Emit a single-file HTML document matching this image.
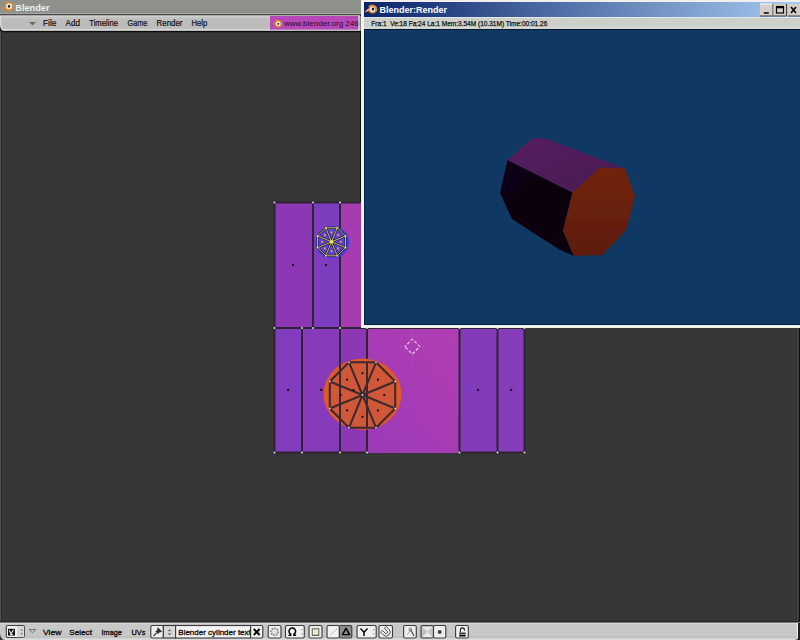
<!DOCTYPE html>
<html><head><meta charset="utf-8">
<style>
html,body{margin:0;padding:0;width:800px;height:640px;overflow:hidden;background:#373737;font-family:"Liberation Sans",sans-serif;}
svg{position:absolute;left:0;top:0;}
</style></head>
<body>
<svg width="800" height="640" viewBox="0 0 800 640" font-family="Liberation Sans, sans-serif">
<defs>
  <linearGradient id="tb" x1="0" x2="1" y1="0" y2="0">
    <stop offset="0" stop-color="#0a246a"/>
    <stop offset="1" stop-color="#a6caf0"/>
  </linearGradient>
  <linearGradient id="uvA" x1="0" x2="1" y1="0" y2="0">
    <stop offset="0" stop-color="#8c3cc4"/>
    <stop offset="1" stop-color="#a43cb8"/>
  </linearGradient>
  <linearGradient id="uvBig" x1="0" x2="1" y1="1" y2="0">
    <stop offset="0" stop-color="#9c3ab8"/>
    <stop offset="1" stop-color="#b23eb2"/>
  </linearGradient>
  <linearGradient id="orF" x1="0" x2="0" y1="0" y2="1">
    <stop offset="0" stop-color="#72240e"/>
    <stop offset="1" stop-color="#5e1c0a"/>
  </linearGradient>
  <linearGradient id="topF" x1="0" x2="1" y1="0" y2="1">
    <stop offset="0" stop-color="#561e60"/>
    <stop offset="1" stop-color="#4a1a52"/>
  </linearGradient>
  <radialGradient id="logoG" cx="0.5" cy="0.5" r="0.5">
    <stop offset="0" stop-color="#ffffff"/>
    <stop offset="1" stop-color="#f0a020"/>
  </radialGradient>
</defs>

<!-- main background -->
<rect x="0" y="0" width="800" height="640" fill="#373737"/>

<!-- main title bar -->
<rect x="0" y="0" width="361" height="13" fill="#8f918d"/>
<rect x="0" y="13" width="361" height="1.5" fill="#a5a6a3"/>
<rect x="0" y="14.5" width="361" height="1" fill="#282828"/>
<rect x="358" y="16" width="2.5" height="15" fill="#d8c8d8"/>
<rect x="360" y="31" width="1" height="2" fill="#303030"/>
<g transform="translate(0,-0.7)">
  <path d="M2,9 L5.5,5.5 L4,3 L8,3 C11.5,2.5 14,4.5 14,7 C14,10 11.5,12 8.5,12 C5.5,12 4,10.5 4,9 Z" fill="#d88a30"/>
  <circle cx="9" cy="7" r="3" fill="#f8f0d0"/>
  <ellipse cx="9" cy="7" rx="1.2" ry="1.5" fill="#10206a"/>
</g>
<text x="15.3" y="10.7" font-size="9.2" font-weight="bold" fill="#f0f0f0">Blender</text>

<!-- menu bar -->
<rect x="0" y="15.5" width="360" height="15.5" fill="#bcbcbc"/>
<rect x="0" y="15.5" width="360" height="1.2" fill="#e0e0e0"/>
<rect x="0" y="16.7" width="360" height="2.3" fill="#c3c3c3"/>
<rect x="0" y="29" width="360" height="1.5" fill="#d8d8d8"/>
<rect x="0" y="30.9" width="361" height="1.2" fill="#0c0c0c"/>
<rect x="0" y="32.1" width="361" height="1" fill="#2c2c2c"/>
<rect x="0" y="16" width="1.2" height="10" fill="#dadada"/>
<path d="M0,25 Q0,31 6,31.5 L0,32 Z" fill="#1a1a1a"/>
<path d="M1,25 Q1,30 6,30" stroke="#e0e0e0" stroke-width="1" fill="none"/>
<path d="M0,29 Q0,32 3,32.5 L0,33 Z" fill="#505050"/>
<path d="M29,22 L36,22 L32.5,25.5 Z" fill="#6a6a6a"/>
<g font-size="8.4" fill="#101010" stroke="#101010" stroke-width="0.2">
  <text x="43" y="26.3" textLength="13.5" lengthAdjust="spacingAndGlyphs">File</text>
  <text x="65.5" y="26.3" textLength="14.5" lengthAdjust="spacingAndGlyphs">Add</text>
  <text x="89.2" y="26.3" textLength="29" lengthAdjust="spacingAndGlyphs">Timeline</text>
  <text x="127.5" y="26.3" textLength="19.8" lengthAdjust="spacingAndGlyphs">Game</text>
  <text x="156.6" y="26.3" textLength="25.8" lengthAdjust="spacingAndGlyphs">Render</text>
  <text x="191.5" y="26.3" textLength="15.8" lengthAdjust="spacingAndGlyphs">Help</text>
</g>
<rect x="270" y="16" width="88" height="13.6" fill="#b648b8"/>
<g transform="translate(272,18)">
  <path d="M1,6 L4,3 L3,1.5 L6,2 C8.5,2 10,3.5 10,5.5 C10,8 8,9.5 6,9.5 C4,9.5 2.5,8 2.5,6.5 Z" fill="#e88a1a"/>
  <circle cx="6.3" cy="5.8" r="2.2" fill="#ffffff"/>
  <circle cx="6.3" cy="5.8" r="1.1" fill="#10306a"/>
</g>
<text x="284" y="26" font-size="8" fill="#2a0a2a">www.blender.org 246</text>

<rect x="0" y="32" width="1" height="590" fill="#504e52"/>
<rect x="1" y="32" width="1" height="590" fill="#2a2a2c"/>
<rect x="796" y="327" width="1" height="295" fill="#303030"/>
<rect x="797" y="327" width="1.6" height="295" fill="#4a4a4a"/>
<rect x="798.8" y="327" width="1.2" height="295" fill="#101010"/>
<!-- UV map -->
<g id="uv">
  <rect x="275" y="203" width="38" height="125" fill="#8c37b4"/>
  <rect x="313" y="203" width="27" height="125" fill="#7e3cbe"/>
  <rect x="340" y="203" width="21" height="125" fill="#a53caf"/>
  <rect x="275" y="328" width="27" height="125" fill="#823cbe"/>
  <rect x="302" y="328" width="38" height="125" fill="#873ab9"/>
  <rect x="340" y="328" width="27" height="125" fill="#8c37b4"/>
  <rect x="367" y="328" width="92.5" height="125" fill="url(#uvBig)"/>
  <rect x="459.5" y="328" width="38" height="125" fill="#823cb9"/>
  <rect x="497.5" y="328" width="27" height="125" fill="#873cb9"/>
  <g stroke="#2e2434" stroke-width="2" fill="none">
    <path d="M274.5,202.5 H361 M274.5,202.5 V453 M313,202.5 V328 M340,202.5 V453 M274.5,328 H525 M302,328 V453 M367,328 V453 M459.5,328 V453 M497.5,328 V453 M524.5,328 V453 M274.5,452.5 H367 M459.5,452.5 H525"/>
  </g>
  <g fill="#1a1020">
    <rect x="292" y="264" width="2" height="2"/>
    <rect x="325" y="264" width="2" height="2"/>
    <rect x="287" y="388.8" width="2.2" height="2.2"/>
    <rect x="320" y="388.8" width="2.2" height="2.2"/>
    <rect x="477" y="388.8" width="2.2" height="2.2"/>
    <rect x="510" y="388.8" width="2.2" height="2.2"/>
  </g>
  <!-- orange face -->
  <ellipse cx="362.5" cy="394.3" rx="39" ry="35.8" fill="#e0582a"/>
  <polygon points="349.0,362.3 376.0,362.3 395.2,381.5 395.2,408.5 376.0,427.7 349.0,427.7 329.8,408.5 329.8,381.5" fill="#d05838"/>
  <g stroke="#3a2a2e" stroke-width="2" fill="none">
    <polygon points="349.0,362.3 376.0,362.3 395.2,381.5 395.2,408.5 376.0,427.7 349.0,427.7 329.8,408.5 329.8,381.5"/>
    <path d="M362.5,395L349.0,362.3 M362.5,395L376.0,362.3 M362.5,395L395.2,381.5 M362.5,395L395.2,408.5 M362.5,395L376.0,427.7 M362.5,395L349.0,427.7 M362.5,395L329.8,408.5 M362.5,395L329.8,381.5"/>
    <path d="M340,362 V428 M367,362 V428"/>
  </g>
  <g fill="#1a1010">
    <rect x="361.5" y="372.2" width="2" height="2"/>
    <rect x="376.9" y="378.6" width="2" height="2"/>
    <rect x="383.3" y="394" width="2" height="2"/>
    <rect x="376.9" y="409.4" width="2" height="2"/>
    <rect x="361.5" y="415.8" width="2" height="2"/>
    <rect x="346.1" y="409.4" width="2" height="2"/>
    <rect x="339.7" y="394" width="2" height="2"/>
    <rect x="346.1" y="378.6" width="2" height="2"/>
    <rect x="352.5" y="389" width="2" height="2"/>
  </g>
  <!-- blue face -->
  <ellipse cx="332.4" cy="242.3" rx="17" ry="16.3" fill="#4a3ce4"/>
  <polygon points="325.7,227.8 337.3,227.8 345.5,236.0 345.5,247.6 337.3,255.8 325.7,255.8 317.5,247.6 317.5,236.0" fill="#5a44d4"/>
  <g stroke="#181828" stroke-width="2.3" fill="none" opacity="0.8">
    <polygon points="325.7,227.8 337.3,227.8 345.5,236.0 345.5,247.6 337.3,255.8 325.7,255.8 317.5,247.6 317.5,236.0"/>
    <path d="M331.5,241.8L325.7,227.8 M331.5,241.8L337.3,227.8 M331.5,241.8L345.5,236.0 M331.5,241.8L345.5,247.6 M331.5,241.8L337.3,255.8 M331.5,241.8L325.7,255.8 M331.5,241.8L317.5,247.6 M331.5,241.8L317.5,236.0"/>
  </g>
  <g stroke="#d8c858" stroke-width="0.9" fill="none">
    <polygon points="325.7,227.8 337.3,227.8 345.5,236.0 345.5,247.6 337.3,255.8 325.7,255.8 317.5,247.6 317.5,236.0"/>
    <path d="M331.5,241.8L325.7,227.8 M331.5,241.8L337.3,227.8 M331.5,241.8L345.5,236.0 M331.5,241.8L345.5,247.6 M331.5,241.8L337.3,255.8 M331.5,241.8L325.7,255.8 M331.5,241.8L317.5,247.6 M331.5,241.8L317.5,236.0"/>
  </g>
  <circle cx="331.5" cy="241.8" r="1.8" fill="#e8e870"/>
  <g fill="#e8e0b0">
    <circle cx="325.7" cy="227.8" r="0.9"/><circle cx="337.3" cy="227.8" r="0.9"/><circle cx="345.5" cy="236" r="0.9"/><circle cx="345.5" cy="247.6" r="0.9"/>
    <circle cx="337.3" cy="255.8" r="0.9"/><circle cx="325.7" cy="255.8" r="0.9"/><circle cx="317.5" cy="247.6" r="0.9"/><circle cx="317.5" cy="236" r="0.9"/>
  </g>
  <g fill="#e89060">
    <circle cx="331.5" cy="232.4" r="1.1"/><circle cx="338.1" cy="235.2" r="1.1"/><circle cx="340.9" cy="241.8" r="1.1"/><circle cx="338.1" cy="248.4" r="1.1"/>
    <circle cx="331.5" cy="251.2" r="1.1"/><circle cx="324.9" cy="248.4" r="1.1"/><circle cx="322.1" cy="241.8" r="1.1"/><circle cx="324.9" cy="235.2" r="1.1"/>
  </g>
  <g><circle cx="274.5" cy="202.5" r="1" fill="#e8d8e8"/><circle cx="313" cy="202.5" r="1" fill="#e8d8e8"/><circle cx="340" cy="202.5" r="1" fill="#e8d8e8"/><circle cx="274.5" cy="328" r="1" fill="#e8d8e8"/><circle cx="302" cy="328" r="1" fill="#e8d8e8"/><circle cx="313" cy="328" r="1" fill="#e8d8e8"/><circle cx="340" cy="328" r="1" fill="#e8d8e8"/><circle cx="367" cy="328" r="1" fill="#e8d8e8"/><circle cx="459.5" cy="328" r="1" fill="#e8d8e8"/><circle cx="497.5" cy="328" r="1" fill="#e8d8e8"/><circle cx="524.5" cy="328" r="1" fill="#e8d8e8"/><circle cx="274.5" cy="452.5" r="1" fill="#e8d8e8"/><circle cx="302" cy="452.5" r="1" fill="#e8d8e8"/><circle cx="340" cy="452.5" r="1" fill="#e8d8e8"/><circle cx="367" cy="452.5" r="1" fill="#e8d8e8"/><circle cx="459.5" cy="452.5" r="1" fill="#e8d8e8"/><circle cx="497.5" cy="452.5" r="1" fill="#e8d8e8"/><circle cx="524.5" cy="452.5" r="1" fill="#e8d8e8"/></g>
  <g><circle cx="349.0" cy="362.3" r="0.9" fill="#e0e0e0"/><circle cx="376.0" cy="362.3" r="0.9" fill="#e0e0e0"/><circle cx="395.2" cy="381.5" r="0.9" fill="#e0e0e0"/><circle cx="395.2" cy="408.5" r="0.9" fill="#e0e0e0"/><circle cx="376.0" cy="427.7" r="0.9" fill="#e0e0e0"/><circle cx="349.0" cy="427.7" r="0.9" fill="#e0e0e0"/><circle cx="329.8" cy="408.5" r="0.9" fill="#e0e0e0"/><circle cx="329.8" cy="381.5" r="0.9" fill="#e0e0e0"/><circle cx="362.5" cy="395" r="0.9" fill="#e0e0e0"/></g>
  <!-- 2d cursor -->
  <path d="M404.8,346.6 L412.3,339.1 L419.8,346.6 L412.3,354.1 Z" fill="none" stroke="#f4c8f0" stroke-width="1.2" stroke-dasharray="3.2 1.8" stroke-dashoffset="1.5" stroke-linejoin="round"/>
  <path d="M398,346.6 H404 M420.5,346.6 H426 M412.3,332 V338 M412.3,355 V361" stroke="#c060c0" stroke-width="1" opacity="0.35"/>
</g>

<!-- render window -->
<rect x="360" y="31" width="1" height="171" fill="#0c100c"/>
<rect x="361" y="0" width="439" height="328" fill="#eef4ee"/>
<rect x="361" y="0" width="439" height="2" fill="#f4eeee"/>
<rect x="364" y="2" width="436" height="15" fill="url(#tb)"/>
<g>
  <path d="M365,11.5 L369.5,7.5 L368,6.5 L371,4.5 L373,4.8 C375.8,5 377.3,7 377.3,9 C377.3,11.8 375,13.5 372.5,13.5 C370.3,13.5 369,12.5 368.5,11 L366,12.5 Z" fill="#e08a30"/>
  <path d="M365,11.5 L368.5,8.5 L368.8,10.5 Z" fill="#f0a0a0"/>
  <circle cx="372.5" cy="9.2" r="2.7" fill="#f4ecc8"/>
  <ellipse cx="373" cy="9" rx="1.3" ry="1.5" fill="#0a1a50"/>
</g>
<text x="379.5" y="13.2" font-size="9" font-weight="bold" fill="#ffffff">Blender:Render</text>
<!-- window buttons -->
<g>
  <rect x="760" y="4" width="13" height="12" fill="#d4d0c8" stroke="#404040" stroke-width="0"/>
  <path d="M760,16 H773 V4" stroke="#404040" fill="none"/>
  <path d="M760,4 H772" stroke="#ffffff" fill="none"/>
  <rect x="763.8" y="12.2" width="5" height="1.5" fill="#000"/>
  <rect x="773.5" y="4" width="13" height="12" fill="#d4d0c8"/>
  <path d="M773.5,16 H786.5 V4" stroke="#404040" fill="none"/>
  <rect x="776.5" y="6.5" width="7" height="6.5" fill="none" stroke="#000" stroke-width="1.2"/>
  <rect x="776.5" y="6.5" width="7" height="1.8" fill="#000"/>
  <rect x="788" y="4" width="13" height="12" fill="#d4d0c8"/>
  <path d="M788,16 H801" stroke="#404040" fill="none"/>
  <path d="M791,7 L796,13 M796,7 L791,13" stroke="#000" stroke-width="1.6"/>
</g>
<rect x="364" y="17" width="436" height="12" fill="#cdd0c8"/>
<rect x="364" y="27.2" width="436" height="1.2" fill="#dadcd8"/>
<rect x="364" y="17" width="436" height="1" fill="#e2e6ee"/>

<text x="371.3" y="26" font-size="7.8" fill="#101010" stroke="#101010" stroke-width="0.25" textLength="176" lengthAdjust="spacingAndGlyphs" xml:space="preserve">Fra:1  Ve:18 Fa:24 La:1 Mem:3.54M (10.31M) Time:00:01.26</text>
<rect x="364" y="29" width="436" height="295" fill="#0f3963"/>
<rect x="364" y="29" width="436" height="0.9" fill="#081430"/>
<rect x="364" y="324" width="436" height="1" fill="#061a40"/>
<rect x="364" y="29" width="1" height="295" fill="#0a2040"/>

<!-- 3D object -->
<filter id="soft" x="-10%" y="-10%" width="120%" height="120%"><feGaussianBlur stdDeviation="0.6"/></filter>
<linearGradient id="darkF" x1="0" x2="1" y1="0" y2="1">
  <stop offset="0" stop-color="#0c0614"/>
  <stop offset="1" stop-color="#07030a"/>
</linearGradient>
<g filter="url(#soft)">
  <polygon points="507.5,160 572.5,192.5 563,231 574,256 560,250 512,219 500,193" fill="url(#darkF)"/>
  <polygon points="507.5,160 532.5,138.5 544,138 625,168.5 600,167.5 572.5,192.5" fill="url(#topF)"/>
  <polygon points="572.5,192.5 600,167.5 625,168.5 635,196 626,230 602,255 574,256 563,231" fill="url(#orF)"/>
</g>

<!-- bottom toolbar -->
<rect x="0" y="621.5" width="800" height="1.2" fill="#141414"/>
<rect x="0" y="622.7" width="800" height="17.3" fill="#c8c8c8"/>
<rect x="0" y="622.7" width="800" height="1.3" fill="#d8d8d8"/>
<rect x="0" y="636.3" width="800" height="1" fill="#bcbcbc"/>
<rect x="0" y="638.5" width="800" height="1.5" fill="#dcdcdc"/>
<rect x="797" y="623" width="1" height="15" fill="#f0f0f0"/>
<rect x="798" y="623" width="2" height="17" fill="#202020"/>
<path d="M800,633 Q800,639 795,639.5 L800,640 Z" fill="#202020"/>
<path d="M0,633 Q0,639 5,639.5 L0,640 Z" fill="#303030"/>
<g stroke="#3e3e3e" stroke-width="1.15">
  <!-- editor type -->
  <rect x="6.3" y="625.5" width="18" height="12" rx="1.5" fill="#f4f4f4"/>
  <!-- pin, arrows, text, X -->
  <rect x="150.8" y="625.5" width="12.6" height="12.5" rx="1.5" fill="#eeeeee"/>
  <rect x="163.4" y="625.5" width="12.2" height="12.5" fill="#d8d8d8"/>
  <rect x="175.6" y="625.5" width="75" height="12.5" fill="#f4f4f4"/>
  <rect x="250.6" y="625.5" width="12.2" height="12.5" rx="1.5" fill="#f0f0f0"/>
  <rect x="268.2" y="625.5" width="12.8" height="12.5" rx="1.5" fill="#eeeeee"/>
  <rect x="285.5" y="625.5" width="18.8" height="12.5" rx="1.5" fill="#f2f2f2"/>
  <rect x="309" y="625.5" width="13" height="12.5" rx="1.5" fill="#eeeeee"/>
  <rect x="327" y="625.5" width="12.4" height="12.5" rx="1.5" fill="#f2f2f2"/>
  <rect x="339.4" y="625.5" width="12.4" height="12.5" rx="1.5" fill="#8c8c8c"/>
  <rect x="357" y="625.5" width="19.2" height="12.5" rx="1.5" fill="#f0f0f0"/>
  <rect x="379" y="625.5" width="13.5" height="12.5" rx="1.5" fill="#eeeeee"/>
  <rect x="403.6" y="625.5" width="12.7" height="12.5" rx="1.5" fill="#eeeeee"/>
  <rect x="421" y="625.5" width="12.5" height="12.5" rx="1.5" fill="#c4c4c4"/>
  <rect x="433.5" y="625.5" width="12.3" height="12.5" rx="1.5" fill="#eeeeee"/>
  <rect x="455.6" y="625.5" width="12.7" height="12.5" rx="1.5" fill="#f0f0f0"/>
</g>
<rect x="17" y="626.2" width="7" height="11" fill="#d6d6d6"/>
<rect x="8" y="628.8" width="7" height="6.8" fill="#101010"/>
<path d="M9.3,630.2 L10.8,633.8 L13.6,629.8 M10.2,634.6 L12.8,634.6" stroke="#f0f0f0" stroke-width="1.1" fill="none"/>
<path d="M20.5,630.5 L21.5,628.8 L22.5,630.5 Z M20.5,633 L21.5,634.7 L22.5,633 Z" fill="#606060"/>
<path d="M29,629.5 L36,629.5 L32.5,632.8 Z" fill="none" stroke="#707070" stroke-width="1"/>
<g font-size="7.7" fill="#101010" stroke="#101010" stroke-width="0.32">
  <text x="43" y="634.9" textLength="18.3" lengthAdjust="spacingAndGlyphs">View</text>
  <text x="69.3" y="634.9" textLength="22.6" lengthAdjust="spacingAndGlyphs">Select</text>
  <text x="101.5" y="634.9" textLength="20.4" lengthAdjust="spacingAndGlyphs">Image</text>
  <text x="131.5" y="634.9" textLength="13.8" lengthAdjust="spacingAndGlyphs">UVs</text>
</g>
<clipPath id="fieldClip"><rect x="176" y="625" width="74.5" height="13"/></clipPath>
<text x="178.3" y="634.7" font-size="7.7" fill="#101010" stroke="#101010" stroke-width="0.3" textLength="72.5" lengthAdjust="spacingAndGlyphs" clip-path="url(#fieldClip)">Blender cylinder text</text>
<!-- pin icon -->
<path d="M153.5,636 L156.5,633" stroke="#303030" stroke-width="1.1"/>
<path d="M155.5,631.5 L158.5,628.5 L161,631 L158,634 Z" fill="#303030"/>
<path d="M157.5,628 L161.5,632" stroke="#303030" stroke-width="1.6"/>
<path d="M167.5,631.2 L169.5,629 L171.5,631.2 Z M167.5,633.2 L169.5,635.4 L171.5,633.2 Z" fill="#707070"/>
<path d="M253.8,629 L259.6,635 M259.6,629 L253.8,635" stroke="#000" stroke-width="1.9"/>
<!-- sun -->
<g transform="translate(274.6,631.8)">
  <circle r="3.6" fill="#d8d8d0" stroke="#8a8a80" stroke-width="1.6" stroke-dasharray="1.6 1.1"/>
  <circle r="1.8" fill="#e8e8e0"/>
</g>
<!-- omega -->
<path d="M288.5,635.2 h2.2 v-1 a3.3,3.3 0 1 1 3.2,0 v1 h2.2" stroke="#000" stroke-width="1.5" fill="none"/>
<path d="M301,630.2 L302,628.8 L303,630.2 Z M301,633.6 L302,635 L303,633.6 Z" fill="#909090"/>
<!-- square -->
<rect x="312.3" y="628.8" width="6.5" height="6.5" fill="#e8e8e0" stroke="#707060" stroke-width="1.1"/>
<path d="M312,635.4 H319" stroke="#606848" stroke-width="1"/>
<path d="M330.5,635 L337,628.8" stroke="#a0a0a0" stroke-width="1" stroke-dasharray="1.5 1"/>
<path d="M346,628.3 L349.6,634.6 L342.4,634.6 Z" stroke="#000" stroke-width="1.4" fill="none" stroke-linejoin="round"/>
<path d="M360.5,628.5 L364,632.2 L367.5,628.5 M364,632.2 V636" stroke="#000" stroke-width="1.5" fill="none"/>
<path d="M372.5,630.2 L373.5,628.8 L374.5,630.2 Z M372.5,633.6 L373.5,635 L374.5,633.6 Z" fill="#909090"/>
<!-- magnet -->
<g transform="translate(385.8,631.8) rotate(-45)">
  <path d="M-4,-3.5 V0.5 a4,4 0 0 0 8,0 V-3.5 h-2.6 V0.5 a1.4,1.4 0 0 1 -2.8,0 V-3.5 Z" fill="#e8e8e8" stroke="#505050" stroke-width="0.9"/>
</g>
<!-- brush -->
<path d="M410.5,629.5 L414,636" stroke="#505050" stroke-width="1.3"/>
<circle cx="410.3" cy="629.4" r="1.4" fill="none" stroke="#707070" stroke-width="0.9"/>
<path d="M407,635 L410,631" stroke="#a0a0a0" stroke-width="1"/>
<!-- hourglass -->
<path d="M422.5,627 L432.5,627 L427.5,631.8 Z M422.5,637 L432.5,637 L427.5,631.8 Z" fill="#e8e8e8"/>
<circle cx="439.7" cy="632" r="2" fill="#404040"/>
<!-- lock -->
<rect x="459.2" y="632.6" width="6.4" height="4" fill="#101010"/>
<path d="M460.3,632.6 V630 a2.1,2.1 0 0 1 4.2,0 V630.8" stroke="#202020" stroke-width="1.1" fill="none"/>
<rect x="459.2" y="633.8" width="6.4" height="0.8" fill="#f0f0f0"/>
</svg>
</body></html>
